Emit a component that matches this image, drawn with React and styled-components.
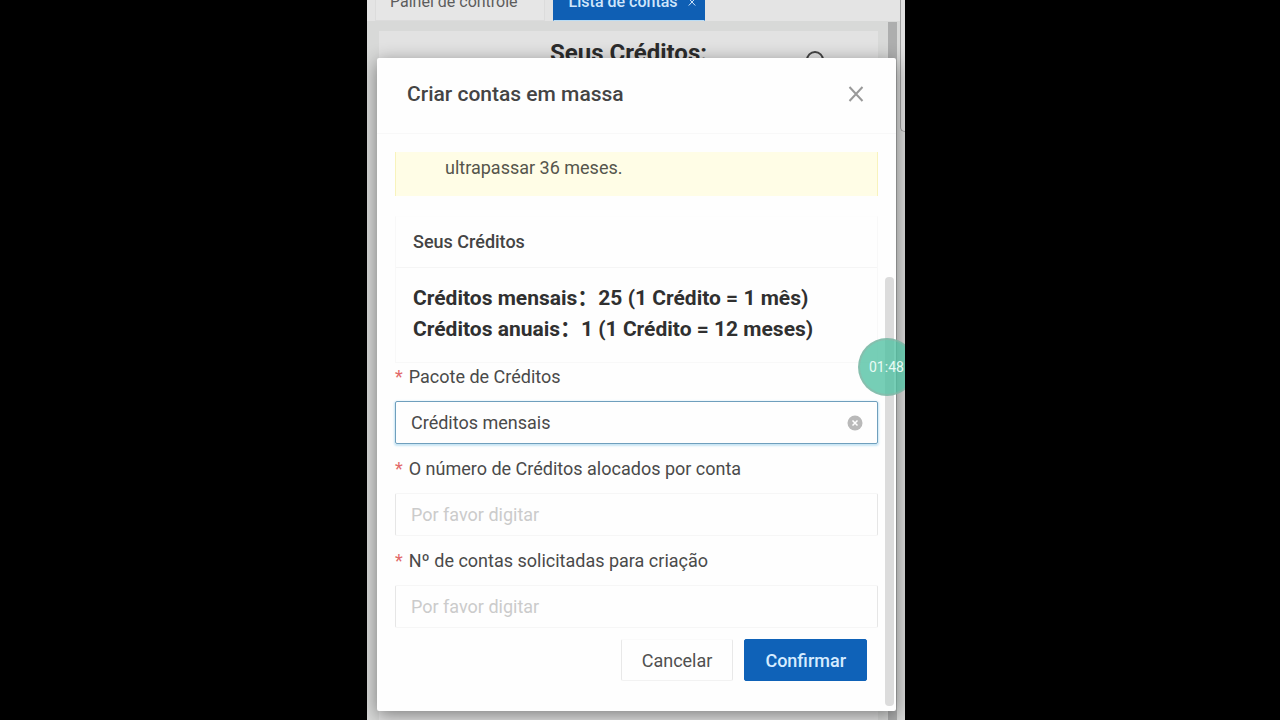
import React, { useState } from "react";
import styled, { createGlobalStyle } from "styled-components";

const GlobalStyle = createGlobalStyle`
  * {
    box-sizing: border-box;
  }

  body {
    margin: 0;
    background: #000;
    font-family: Roboto, "Noto Sans CJK SC", sans-serif;
    color: #4a4a4a;
  }

  button,
  input,
  select {
    font-family: inherit;
  }
`;

const Stage = styled.div`
  height: 100vh;
  padding-right: 8px;
  display: flex;
  justify-content: center;
  overflow: hidden;
`;

const Phone = styled.main`
  position: relative;
  width: 100%;
  max-width: 538px;
  display: flex;
  flex-direction: column;
  background: #d8d9d8;
  overflow: hidden;
`;

const Tabs = styled.nav`
  height: 21px;
  padding-left: 8px;
  display: flex;
  align-items: flex-end;
  gap: 8px;
  background: #e4e4e4;
`;

const Tab = styled.button`
  height: 38px;
  padding: ${(props) => (props.$active ? "0 8px 0 15px" : "0 26px 0 14px")};
  display: flex;
  align-items: center;
  gap: 10px;
  border: 1px solid ${(props) => (props.$active ? "#0f5fb4" : "#dcdcdc")};
  border-bottom-color: ${(props) => (props.$active ? "#b9dcf5" : "#dcdcdc")};
  background: ${(props) => (props.$active ? "#0f5fb4" : "#e6e6e6")};
  color: ${(props) => (props.$active ? "#cfe6fb" : "#5c5c5c")};
  font-size: 16px;
  font-weight: ${(props) => (props.$active ? 500 : 400)};
  line-height: 20px;
  white-space: nowrap;
`;

const Panel = styled.section`
  flex: 1;
  margin: 10px 27px 0 12px;
  padding: 8px 16px 0;
  display: grid;
  grid-template-columns: 1fr auto 1fr;
  align-content: space-between;
  background: #e2e2e2;
`;

const PanelTitle = styled.h1`
  grid-column: 2;
  margin: 0;
  color: #2c2c2c;
  font-size: 24px;
  font-weight: 700;
  line-height: 28px;
`;

const SearchButton = styled.button`
  justify-self: end;
  margin-right: 30px;
  padding: 0;
  border: 0;
  background: none;
  color: #444;
  line-height: 0;
`;

const PageScroll = styled.div`
  position: absolute;
  top: 22px;
  right: 8px;
  bottom: 0;
  width: 9px;
  background: #adaeae;
`;

const FrameScroll = styled.div`
  position: absolute;
  top: -10px;
  right: 0;
  width: 5px;
  height: 142px;
  border: 1px solid #a0a0a0;
  border-right: 0;
  border-radius: 0 0 0 5px;
  background: #e0e0e0;
`;

const Dialog = styled.section`
  position: absolute;
  top: 58px;
  left: 10px;
  right: 9px;
  border-radius: 2px;
  background: #fefefe;
  box-shadow: 0 4px 18px rgba(0, 0, 0, 0.45);
`;

const DialogHeader = styled.header`
  height: 76px;
  padding: 0 30px 3px;
  display: flex;
  align-items: center;
  justify-content: space-between;
  border-bottom: 1px solid #f8f8f8;
`;

const DialogTitle = styled.h2`
  margin: 0;
  color: #444;
  font-size: 21px;
  font-weight: 500;
  line-height: 28px;
`;

const IconButton = styled.button`
  width: 20px;
  height: 20px;
  padding: 0;
  display: grid;
  place-items: center;
  border: 0;
  background: none;
  color: #999;
`;

const DialogBody = styled.form`
  padding: 18px 18px 30px;
`;

const Alert = styled.p`
  height: 44px;
  margin: 0 0 20px;
  padding: 4px 49px;
  border: solid #f8f3bd;
  border-width: 0 1px;
  background: #fffde6;
  color: #55554c;
  font-size: 18px;
  line-height: 24px;
`;

const Card = styled.section`
  border: 1px solid #f8f8f8;
  border-top-color: #fdfdfd;
`;

const CardTitle = styled.h3`
  margin: 0;
  padding: 13px 17px;
  border-bottom: 1px solid #f5f5f5;
  color: #444;
  font-size: 18px;
  font-weight: 500;
  line-height: 24px;
`;

const Credits = styled.p`
  margin: 0;
  padding: 15px 17px 17px;
  color: #303030;
  font-size: 21px;
  font-weight: 700;
  line-height: 31px;
`;

const Label = styled.label`
  height: 38px;
  display: flex;
  gap: 6px;
  font-size: 18px;
  line-height: 28px;

  &::before {
    content: "*";
    color: #e26a6a;
  }
`;

const Field = styled.div`
  height: 43px;
  margin-bottom: 11px;
  padding: 0 12px 0 15px;
  display: flex;
  align-items: center;
  border: 1px solid;
  border-color: ${(props) => (props.$active ? "#6f9fbd" : "#f6f6f6 #e6e6e6")};
  border-radius: 2px;
  box-shadow: ${(props) => (props.$active ? "0 1px 2px 1px #c9e6f5" : "none")};
`;

const Select = styled.select`
  flex: 1;
  padding: 0;
  border: 0;
  outline: 0;
  appearance: none;
  background: none;
  color: #4a4a4a;
  font-size: 18px;
`;

const Input = styled.input`
  flex: 1;
  min-width: 0;
  padding: 0;
  border: 0;
  outline: 0;
  background: none;
  color: #4a4a4a;
  font-size: 18px;

  &::placeholder {
    color: #cbcbcb;
  }
`;

const Actions = styled.footer`
  padding-right: 11px;
  display: flex;
  justify-content: flex-end;
  gap: 11px;
`;

const Button = styled.button`
  height: 42px;
  padding: 0 20px;
  border: 1px solid;
  border-color: ${(props) => (props.$primary ? "#0f62b8" : "#fafafa #e8e8e8 #f2f2f2")};
  border-radius: 2px;
  background: ${(props) => (props.$primary ? "#0f62b8" : "#fefefe")};
  color: ${(props) => (props.$primary ? "#d6ecff" : "#505050")};
  font-size: 18px;
  font-weight: ${(props) => (props.$primary ? 500 : 400)};
`;

const DialogScroll = styled.div`
  position: absolute;
  right: 2px;
  bottom: 5px;
  width: 9px;
  height: 429px;
  border-radius: 4px;
  background: #dcdcdc;
`;

const Timer = styled.div`
  position: absolute;
  top: 338px;
  right: -11px;
  width: 58px;
  height: 58px;
  padding-left: 9px;
  display: flex;
  align-items: center;
  border: 2px solid rgba(150, 175, 165, 0.5);
  border-radius: 50%;
  background: rgba(80, 192, 162, 0.78);
  color: #e9fbf5;
  font-size: 14px;
`;

const Cross = ({ size, width = 1 }) => (
  <svg width={size} height={size} viewBox="0 0 16 16" fill="none" stroke="currentColor" strokeWidth={width}>
    <path d="M1.5 1 14.5 15M14.5 1 1.5 15" />
  </svg>
);

const fields = [
  { id: "credits", label: "O número de Créditos alocados por conta" },
  { id: "accounts", label: "Nº de contas solicitadas para criação" },
];

export default function App() {
  const [pack, setPack] = useState("mensais");
  const [values, setValues] = useState({ credits: "", accounts: "" });

  return (
    <>
      <GlobalStyle />
      <Stage>
        <Phone>
          <Tabs>
            <Tab type="button">Painel de controle</Tab>
            <Tab type="button" $active>
              Lista de contas
              <Cross size={8} width={2} />
            </Tab>
          </Tabs>
          <Panel>
            <PanelTitle>Seus Créditos:</PanelTitle>
            <SearchButton type="button" aria-label="Buscar">
              <svg width="28" height="40" viewBox="0 0 28 40" fill="none" stroke="currentColor" strokeWidth="2">
                <circle cx="11" cy="21" r="8" />
                <path d="m17 27 7 7" />
              </svg>
            </SearchButton>
          </Panel>
          <PageScroll />
          <FrameScroll />
          <Dialog role="dialog" aria-labelledby="dialog-title">
            <DialogHeader>
              <DialogTitle id="dialog-title">Criar contas em massa</DialogTitle>
              <IconButton type="button" aria-label="Fechar">
                <Cross size={16} width={2} />
              </IconButton>
            </DialogHeader>
            <DialogBody onSubmit={(e) => e.preventDefault()}>
              <Alert>ultrapassar 36 meses.</Alert>
              <Card>
                <CardTitle>Seus Créditos</CardTitle>
                <Credits>
                  Créditos mensais：25 (1 Crédito = 1 mês)
                  <br />
                  Créditos anuais：1 (1 Crédito = 12 meses)
                </Credits>
              </Card>
              <Label htmlFor="pack">Pacote de Créditos</Label>
              <Field $active>
                <Select id="pack" value={pack} onChange={(e) => setPack(e.target.value)}>
                  <option value="mensais">Créditos mensais</option>
                  <option value="anuais">Créditos anuais</option>
                </Select>
                <IconButton type="button" aria-label="Limpar">
                  <svg width="16" height="16" viewBox="0 0 16 16">
                    <circle cx="8" cy="8" r="7.5" fill="#b9b9b9" />
                    <path d="m5.5 5.5 5 5m0-5-5 5" stroke="#fff" strokeWidth="1.5" />
                  </svg>
                </IconButton>
              </Field>
              {fields.map(({ id, label }) => (
                <React.Fragment key={id}>
                  <Label htmlFor={id}>{label}</Label>
                  <Field>
                    <Input
                      id={id}
                      placeholder="Por favor digitar"
                      value={values[id]}
                      onChange={(e) => setValues({ ...values, [id]: e.target.value })}
                    />
                  </Field>
                </React.Fragment>
              ))}
              <Actions>
                <Button type="button">Cancelar</Button>
                <Button type="submit" $primary>
                  Confirmar
                </Button>
              </Actions>
            </DialogBody>
            <DialogScroll />
          </Dialog>
          <Timer>01:48</Timer>
        </Phone>
      </Stage>
    </>
  );
}
